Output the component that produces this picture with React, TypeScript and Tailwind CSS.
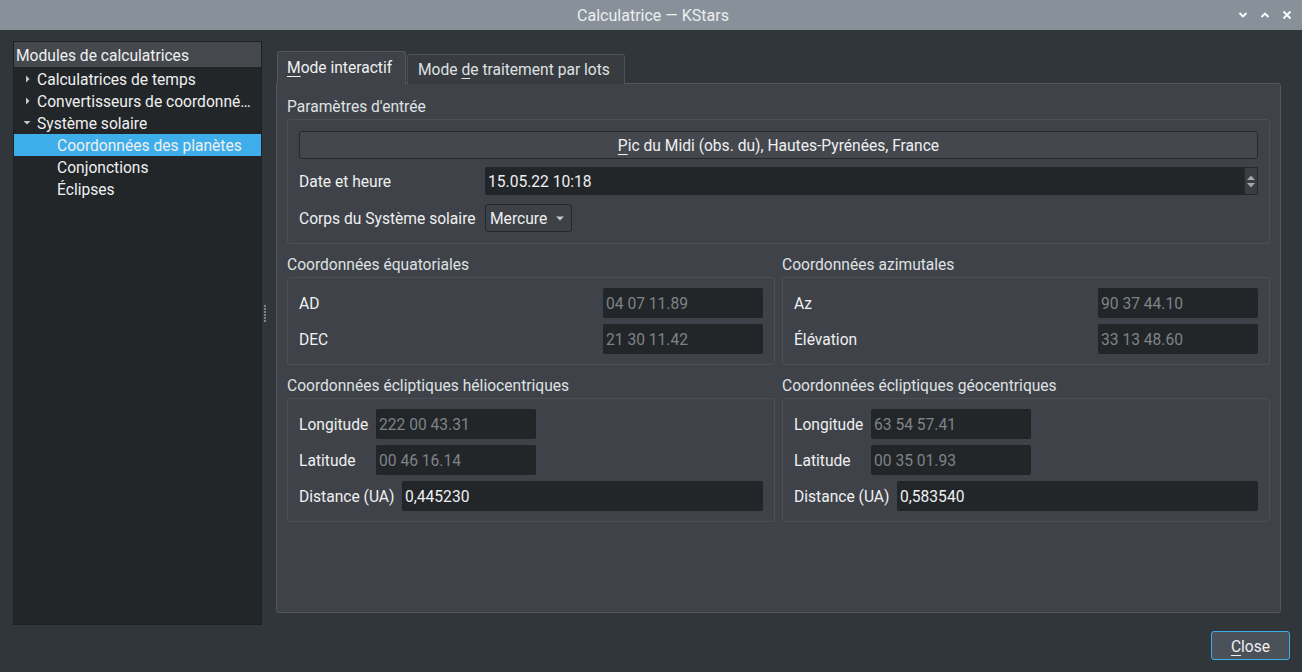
import React from "react";

const F = { fontFamily: "Roboto, 'Noto Sans', sans-serif" };
const T = "text-[15.6px]";
const D = "pt-[4px]"; // baseline nudge for Roboto in centered rows

function RO({ value, w, className = "" }: { value: string; w?: string; className?: string }) {
  return (
    <div className={`h-[30px] bg-[#232629] rounded-[2px] flex items-center pl-[3px] ${T} text-[#7e8388] ${w ?? ""} ${className}`}>
      <span className={D}>{value}</span>
    </div>
  );
}

function ED({ value, className = "" }: { value: string; className?: string }) {
  return (
    <div className={`h-[30px] bg-[#232629] rounded-[2px] flex items-center pl-[3px] ${T} text-[#eff0f1] ${className}`}>
      <span className={D}>{value}</span>
    </div>
  );
}

function GroupLabel({ children }: { children: React.ReactNode }) {
  return <div className={`h-[18px] leading-[18px] ${T} text-[#dfe1e3] mb-[3px] pt-[2px] box-content`}>{children}</div>;
}

function Box({ children, className = "" }: { children: React.ReactNode; className?: string }) {
  return <div className={`border border-[#4c5056] rounded-[3px] px-[11px] py-[10px] ${className}`}>{children}</div>;
}

function EqBox({ title, rows }: { title: string; rows: [string, string][] }) {
  return (
    <div className="flex-1 flex flex-col">
      <GroupLabel>{title}</GroupLabel>
      <Box className="flex flex-col gap-[6px]">
        {rows.map(([l, v]) => (
          <div key={l} className="flex items-center justify-between h-[30px]">
            <span className={`${T} ${D} text-[#eff0f1]`}>{l}</span>
            <RO value={v} w="w-[160px]" />
          </div>
        ))}
      </Box>
    </div>
  );
}

function EclBox({ title, lon, lat, dist }: { title: string; lon: string; lat: string; dist: string }) {
  return (
    <div className="flex-1 flex flex-col">
      <GroupLabel>{title}</GroupLabel>
      <Box className="flex flex-col gap-[6px]">
        <div className="flex items-center h-[30px]">
          <span className={`w-[77px] ${T} ${D} text-[#eff0f1]`}>Longitude</span>
          <RO value={lon} w="w-[160px]" />
        </div>
        <div className="flex items-center h-[30px]">
          <span className={`w-[77px] ${T} ${D} text-[#eff0f1]`}>Latitude</span>
          <RO value={lat} w="w-[160px]" />
        </div>
        <div className="flex items-center h-[30px]">
          <span className={`w-[103px] ${T} ${D} text-[#eff0f1] whitespace-nowrap`}>Distance (UA)</span>
          <ED value={dist} className="flex-1" />
        </div>
      </Box>
    </div>
  );
}

function TreeRow({ depth, arrow, label, selected }: { depth: number; arrow?: "right" | "down"; label: string; selected?: boolean }) {
  return (
    <div className={`h-[22px] flex items-center ${selected ? "bg-[#3daee9]" : ""}`}>
      <div className="w-[23px] shrink-0 flex justify-end pr-[6px]" style={{ marginLeft: depth * 20 }}>
        {arrow === "right" && (
          <svg width="6" height="8" viewBox="0 0 6 8"><path d="M1 0.5 L4.5 4 L1 7.5 Z" fill="#c8cacc" /></svg>
        )}
        {arrow === "down" && (
          <svg width="8" height="6" viewBox="0 0 8 6"><path d="M0.5 1 L7.5 1 L4 4.5 Z" fill="#c8cacc" /></svg>
        )}
      </div>
      <span className={`${T} ${D} text-[#eff0f1] whitespace-nowrap overflow-hidden`}>{label}</span>
    </div>
  );
}

export default function App() {
  return (
    <div className="w-[1302px] h-[672px] flex flex-col bg-[#31363b] overflow-hidden" style={F}>
      {/* Title bar */}
      <div className="h-[30px] bg-[#88919a] flex items-center relative shrink-0">
        <div className="flex-1 text-center text-[16px] text-[#eceef0] pl-[4px] pt-[2px]">Calculatrice — KStars</div>
        <div className="absolute right-[10px] top-0 h-[30px] flex items-center gap-[12px]">
          <svg width="10" height="8" viewBox="0 0 10 8"><path d="M1.5 2 L5 5.5 L8.5 2" stroke="#fff" strokeWidth="1.8" fill="none" /></svg>
          <svg width="10" height="8" viewBox="0 0 10 8"><path d="M1.5 6 L5 2.5 L8.5 6" stroke="#fff" strokeWidth="1.8" fill="none" /></svg>
          <svg width="10" height="10" viewBox="0 0 10 10"><path d="M1.5 1.5 L8.5 8.5 M8.5 1.5 L1.5 8.5" stroke="#fff" strokeWidth="1.8" fill="none" /></svg>
        </div>
      </div>

      {/* Main area */}
      <div className="flex h-[595px] pt-[11px] pl-[13px] pr-[21px] shrink-0">
        {/* Tree */}
        <div className="w-[249px] h-[584px] bg-[#232629] border border-[#1e2124] flex flex-col">
          <div className={`h-[25px] bg-[#45494e] flex items-center pl-[2px] ${T} text-[#eff0f1]`}>
            <span className={D}>Modules de calculatrices</span>
          </div>
          <div className="pt-[1px]">
            <TreeRow depth={0} arrow="right" label="Calculatrices de temps" />
            <TreeRow depth={0} arrow="right" label="Convertisseurs de coordonné…" />
            <TreeRow depth={0} arrow="down" label="Système solaire" />
            <TreeRow depth={1} label="Coordonnées des planètes" selected />
            <TreeRow depth={1} label="Conjonctions" />
            <TreeRow depth={1} label="Éclipses" />
          </div>
        </div>

        {/* Splitter */}
        <div className="w-[14px] flex items-center justify-start pl-[2px]">
          <div className="flex flex-col gap-[1px] -mt-[40px]">
            {[0, 1, 2, 3, 4, 5].map((i) => (
              <div key={i} className="w-[2px] h-[2px] bg-[#7f8489]" />
            ))}
          </div>
        </div>

        {/* Tabs + pane */}
        <div className="flex-1 flex flex-col pt-[10px] pb-[12px]">
          <div className="flex items-end h-[33px] pl-[1px] relative z-10">
            <div className={`h-[33px] w-[129px] bg-[#3f4349] border border-[#54585e] border-b-0 rounded-t-[3px] flex items-center pl-[9px] ${T} text-[#eff0f1]`}>
              <span className="pt-[2px]"><span className="underline underline-offset-[3px]">M</span>ode interactif</span>
            </div>
            <div className={`h-[30px] w-[218px] ml-[1px] bg-[#383c41] border border-[#4e5258] border-b-0 rounded-t-[3px] flex items-center pl-[10px] ${T} text-[#dfe1e3]`}>
              <span className="pt-[2px]">Mode <span className="underline underline-offset-[3px]">d</span>e traitement par lots</span>
            </div>
          </div>
          <div className="flex-1 bg-[#3f4349] border border-[#54585e] rounded-b-[3px] rounded-tr-[3px] -mt-[1px] px-[10px] pt-[12px] flex flex-col">
            <GroupLabel>Paramètres d'entrée</GroupLabel>
            <Box className="pt-[11px] pb-[11px]">
              <div className={`h-[28px] border border-[#26292c] rounded-[3px] bg-[#44484e] flex items-center justify-center ${T} text-[#eff0f1]`}>
                <span className={D}><span className="underline underline-offset-[3px]">P</span>ic du Midi (obs. du), Hautes-Pyrénées, France</span>
              </div>
              <div className="flex items-center mt-[8px] h-[28px]">
                <span className={`w-[186px] ${T} ${D} text-[#eff0f1]`}>Date et heure</span>
                <div className="flex-1 h-[28px] bg-[#232629] rounded-[2px] flex items-center">
                  <span className={`flex-1 pl-[3px] ${T} ${D} text-[#eff0f1]`}>15.05.22 10:18</span>
                  <div className="w-[14px] h-[28px] bg-[#3a3e43] border border-[#26292c] rounded-r-[2px] flex flex-col items-center justify-center gap-[3px]">
                    <svg width="8" height="5" viewBox="0 0 8 5"><path d="M0 5 L4 0.5 L8 5 Z" fill="#a4a7ab" /></svg>
                    <svg width="8" height="5" viewBox="0 0 8 5"><path d="M0 0 L4 4.5 L8 0 Z" fill="#a4a7ab" /></svg>
                  </div>
                </div>
              </div>
              <div className="flex items-center mt-[9px] h-[28px]">
                <span className={`w-[186px] ${T} ${D} text-[#eff0f1] whitespace-nowrap`}>Corps du Système solaire</span>
                <div className={`w-[87px] h-[28px] bg-[#3e4247] border border-[#26292c] rounded-[3px] flex items-center pl-[4px] gap-[9px] ${T} text-[#eff0f1]`}>
                  <span className={D}>Mercure</span>
                  <svg width="8" height="5" viewBox="0 0 8 5"><path d="M0 0.5 L8 0.5 L4 4.5 Z" fill="#c8cacc" /></svg>
                </div>
              </div>
            </Box>

            <div className="flex gap-[7px] mt-[10px]">
              <EqBox title="Coordonnées équatoriales" rows={[["AD", "04 07 11.89"], ["DEC", "21 30 11.42"]]} />
              <EqBox title="Coordonnées azimutales" rows={[["Az", "90 37 44.10"], ["Élévation", "33 13 48.60"]]} />
            </div>

            <div className="flex gap-[7px] mt-[10px]">
              <EclBox title="Coordonnées écliptiques héliocentriques" lon="222 00 43.31" lat="00 46 16.14" dist="0,445230" />
              <EclBox title="Coordonnées écliptiques géocentriques" lon="63 54 57.41" lat="00 35 01.93" dist="0,583540" />
            </div>
          </div>
        </div>
      </div>

      {/* Bottom */}
      <div className="flex justify-end pr-[12px] pt-[6px]">
        <div className={`w-[79px] h-[29px] border border-[#3daee9] rounded-[3px] bg-[#4a5158] flex items-center justify-center ${T} text-[#eff0f1]`}>
          <span className={D}><span className="underline underline-offset-[3px]">C</span>lose</span>
        </div>
      </div>
    </div>
  );
}
